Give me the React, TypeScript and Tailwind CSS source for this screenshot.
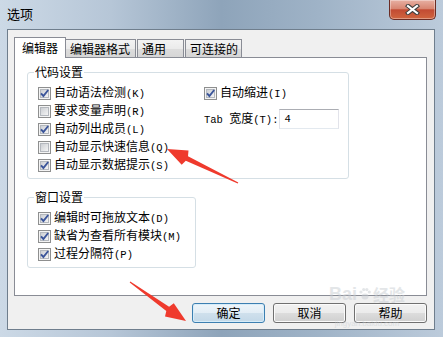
import React from 'react'

const cjk = "font-['Noto_Sans_CJK_SC',sans-serif]"
const mono = "font-['Liberation_Mono',monospace] text-[10.5px]"

function CheckBox({ checked }: { checked: boolean }) {
  return (
    <svg width="13" height="13" viewBox="0 0 13 13" className="shrink-0">
      <defs>
        <linearGradient id="cbInner" x1="0" y1="0" x2="1" y2="1">
          <stop offset="0" stopColor="#c9ccd1" />
          <stop offset="1" stopColor="#f7f7f7" />
        </linearGradient>
      </defs>
      <rect x="0.5" y="0.5" width="12" height="12" fill="#f4f4f4" stroke="#8e8f8f" />
      <rect x="2.5" y="2.5" width="8" height="8" fill="url(#cbInner)" stroke="#b4b8be" />
      {checked && (
        <path d="M3 6.4 L5.4 9 L10.2 3" fill="none" stroke="#3b559a" strokeWidth="1.9" />
      )}
    </svg>
  )
}

function Row({ checked, text, key2 }: { checked: boolean; text: string; key2: string }) {
  return (
    <div className="h-[18px] flex items-center gap-[3px]">
      <CheckBox checked={checked} />
      <span className="text-[12px] leading-none text-black whitespace-nowrap">
        {text}
        <span className={mono}>({key2})</span>
      </span>
    </div>
  )
}

function Group({ label, className, children }: { label: string; className: string; children: React.ReactNode }) {
  return (
    <div className={'relative rounded-[3px] border border-[#d5dfe5] ' + className}>
      <span className="absolute -top-[9px] left-[6px] px-[1px] bg-white text-[12px] leading-[16px] text-black">{label}</span>
      {children}
    </div>
  )
}

function Button({ label, primary }: { label: string; primary?: boolean }) {
  return (
    <button
      type="button"
      className={
        'w-[73px] h-[20px] rounded-[3px] border text-[12px] leading-none text-black flex items-center justify-center ' +
        (primary
          ? 'border-[#3c7fb1] shadow-[inset_0_0_0_1px_#d6ecf9] bg-[linear-gradient(180deg,#eef5fa_0%,#e2edf5_50%,#cfe0ec_50%,#c3d8e8_100%)]'
          : 'border-[#707070] shadow-[inset_0_0_0_1px_#fbfbfb] bg-[linear-gradient(180deg,#f2f2f2_0%,#ebebeb_50%,#dddddd_50%,#cfcfcf_100%)]')
      }
    >
      {label}
    </button>
  )
}

export default function App() {
  return (
    <div className={'relative w-[443px] h-[337px] overflow-hidden flex flex-col bg-[linear-gradient(90deg,#ccd9e6_0%,#b6c6d7_25%,#8ea4ba_50%,#9fb3c7_72%,#bccbdb_100%)] ' + cjk}>
      {/* title bar */}
      <div className="h-[29px] flex items-start shrink-0">
        <span className="pl-[7px] pt-[5px] text-[13px] leading-[18px] text-black">选项</span>
        <div className="ml-auto mr-[7px] w-[47px] h-[20px] rounded-b-[5px] border border-t-0 border-[#6b2c24] bg-[linear-gradient(180deg,#e7b0a3_0%,#d88672_45%,#c24b33_52%,#d0653f_100%)] flex items-center justify-center shadow-[inset_0_0_0_1px_rgba(255,255,255,0.35)]">
          <svg width="15" height="11" viewBox="0 0 15 11">
            <path d="M3 2 L12 9 M12 2 L3 9" stroke="#3d3d3d" strokeWidth="4.2" strokeLinecap="square" />
            <path d="M3 2 L12 9 M12 2 L3 9" stroke="#ffffff" strokeWidth="2.2" strokeLinecap="square" />
          </svg>
        </div>
      </div>

      {/* client area */}
      <div className="ml-[7px] mr-[8px] h-[301px] shrink-0 border border-[#6f7e8d] bg-[#f0f0f0] flex flex-col pt-[7px] pl-[6px] pr-[7px]">
        {/* tabs */}
        <div className="h-[20px] flex items-end text-[12px] leading-none text-black">
          <div className="relative z-10 w-[52px] h-[21px] -mb-px bg-white border border-b-0 border-[#898c95] flex items-center justify-center">编辑器</div>
          <div className="w-[70px] h-[18px] border border-b-0 border-l-0 border-[#898c95] bg-[linear-gradient(180deg,#f3f3f3_0%,#ebebeb_50%,#dddddd_50%,#d6d6d6_100%)] flex items-center pl-[4px]">编辑器格式</div>
          <div className="ml-[1px] w-[47px] h-[18px] border border-b-0 border-[#898c95] bg-[linear-gradient(180deg,#f3f3f3_0%,#ebebeb_50%,#dddddd_50%,#d6d6d6_100%)] flex items-center pl-[4px]">通用</div>
          <div className="ml-[1px] w-[57px] h-[18px] border border-b-0 border-[#898c95] bg-[linear-gradient(180deg,#f3f3f3_0%,#ebebeb_50%,#dddddd_50%,#d6d6d6_100%)] flex items-center pl-[4px]">可连接的</div>
        </div>

        {/* tab panel */}
        <div className="h-[239px] shrink-0 border border-[#898c95] bg-white pl-[12px] flex flex-col">
          <Group label="代码设置" className="mt-[14px] w-[322px] h-[107px] flex pt-[11px] pl-[10px]">
            <div className="w-[166px] flex flex-col">
              <Row checked text="自动语法检测" key2="K" />
              <Row checked={false} text="要求变量声明" key2="R" />
              <Row checked text="自动列出成员" key2="L" />
              <Row checked={false} text="自动显示快速信息" key2="Q" />
              <Row checked text="自动显示数据提示" key2="S" />
            </div>
            <div className="flex flex-col">
              <Row checked text="自动缩进" key2="I" />
              <div className="mt-[7px] h-[20px] flex items-center gap-[1px] text-[12px] leading-none text-black whitespace-nowrap">
                <span>
                  <span className={mono}>Tab </span>宽度<span className={mono}>(T):</span>
                </span>
                <div className={'w-[60px] h-[20px] border border-[#e2e3ea] border-t-[#abadb3] border-b-[#e3e9ef] flex items-center pl-[4px] ' + mono}>4</div>
              </div>
            </div>
          </Group>

          <Group label="窗口设置" className="mt-[18px] w-[169px] h-[71px] flex flex-col pt-[11px] pl-[10px]">
            <Row checked text="编辑时可拖放文本" key2="D" />
            <Row checked text="缺省为查看所有模块" key2="M" />
            <Row checked text="过程分隔符" key2="P" />
          </Group>
        </div>

        {/* buttons */}
        <div className="mt-[7px] h-[20px] flex justify-end gap-2">
          <Button label="确定" primary />
          <Button label="取消" />
          <Button label="帮助" />
        </div>
      </div>

      {/* watermark */}
      <div className="absolute left-[326px] top-[284px] w-[82px] flex flex-col items-center text-[#c9ced3] opacity-50 pointer-events-none">
        <span className="flex items-center text-[18px] leading-[20px] font-bold font-['Liberation_Sans',sans-serif]">
          Bai
          <svg width="14" height="14" viewBox="0 0 14 14" className="mx-[1px]">
            <g fill="#c9ced3">
              <ellipse cx="7" cy="9.5" rx="3.5" ry="3" />
              <circle cx="3" cy="5" r="1.6" />
              <circle cx="5.7" cy="2.6" r="1.6" />
              <circle cx="8.8" cy="2.6" r="1.6" />
              <circle cx="11.3" cy="5" r="1.6" />
            </g>
          </svg>
          <span className={cjk + ' text-[16px]'}>经验</span>
        </span>
        <span className="mt-[15px] text-[8px] leading-[9px] font-['Liberation_Sans',sans-serif]">jingyan.baidu.com</span>
      </div>

      {/* red annotation arrows */}
      <svg className="absolute inset-0 pointer-events-none" width="443" height="337" viewBox="0 0 443 337">
        <polygon
          fill="#ef3a2d"
          points="167,149 188.5,150.4 188,156.2 238.3,182.5 237.7,183.5 185.8,160.8 181.7,164.8"
        />
        <polygon
          fill="#ef3a2d"
          points="186,321 165,316.6 166.3,310.9 129.7,282.5 130.3,281.5 169.1,306.7 173.8,303.2"
        />
      </svg>
    </div>
  )
}
